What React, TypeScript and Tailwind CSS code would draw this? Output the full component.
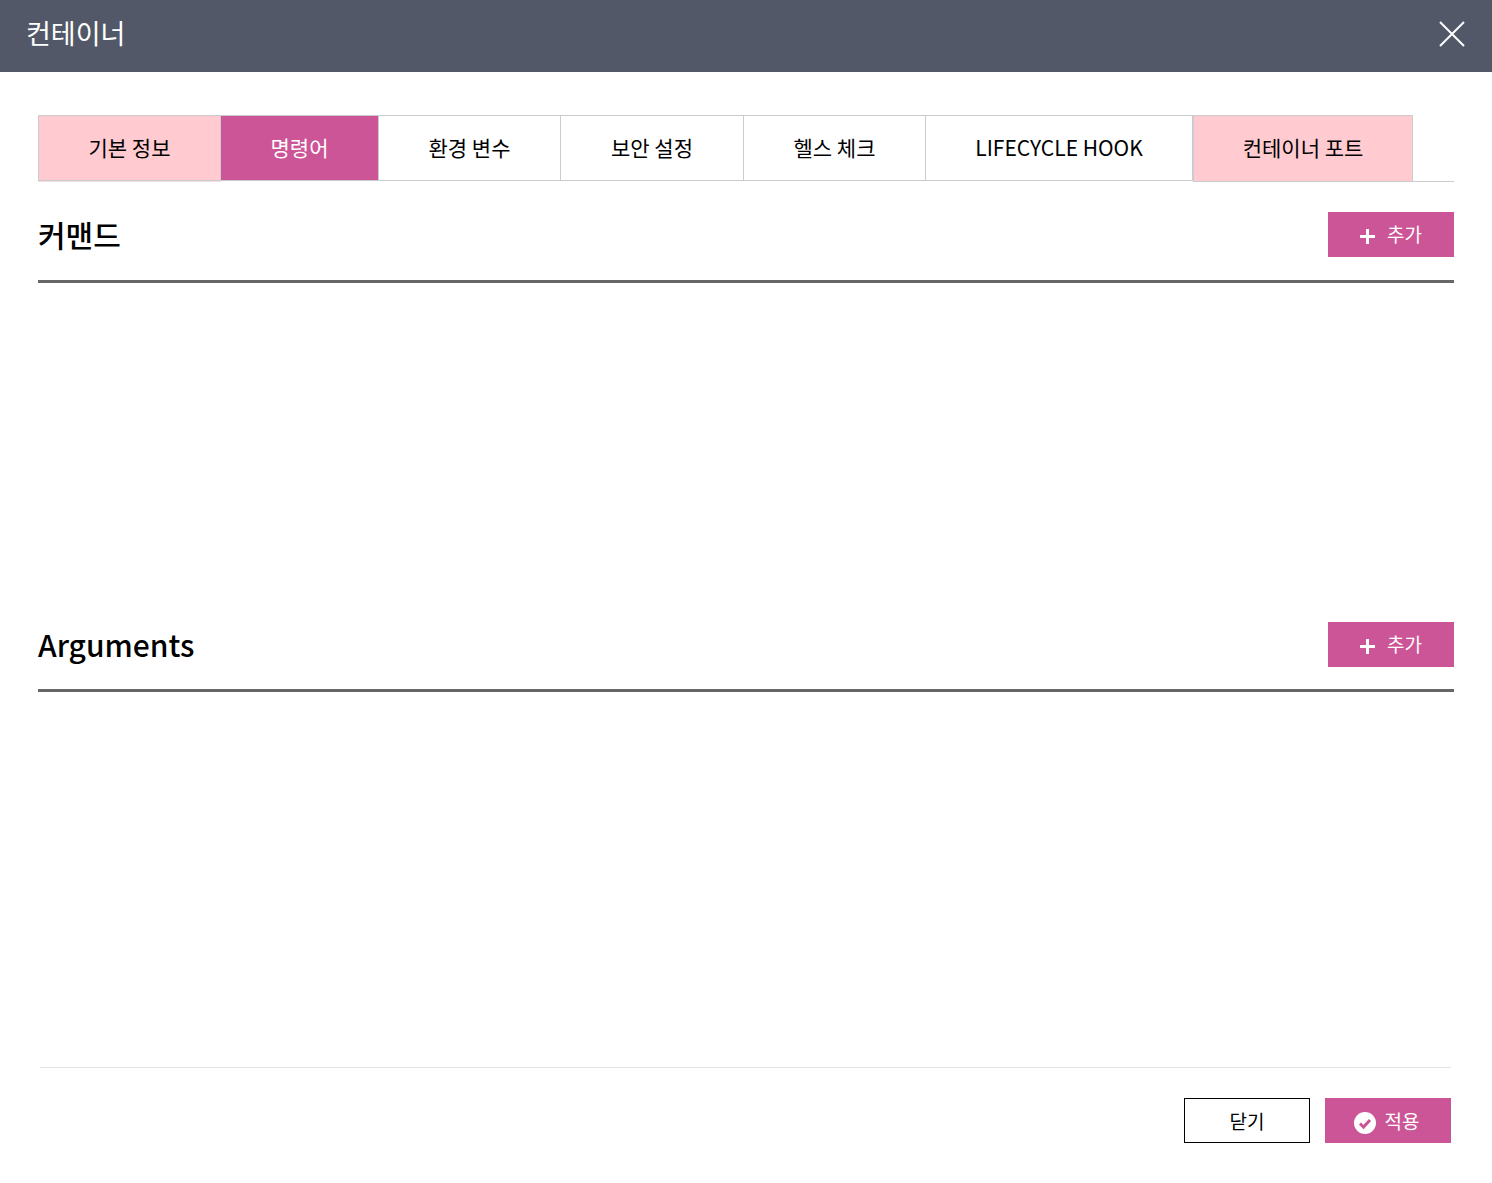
const font = { fontFamily: '"Noto Sans CJK KR", "Noto Sans", sans-serif' };

const tabs = [
  { label: '기본 정보', cls: 'w-[183px] border-l border-b bg-[#ffcbd0] text-black shadow-[0_1px_0_#f3dfe2]' },
  { label: '명령어', cls: 'w-[158px] border-b bg-[#cc5597] text-white shadow-[0_1px_0_#fff]' },
  { label: '환경 변수', cls: 'w-[182px] border-b bg-white text-black shadow-[0_1px_0_#fff]' },
  { label: '보안 설정', cls: 'w-[183px] border-b bg-white text-black shadow-[0_1px_0_#fff]' },
  { label: '헬스 체크', cls: 'w-[182px] border-b bg-white text-black shadow-[0_1px_0_#fff]' },
  { label: 'LIFECYCLE HOOK', cls: 'w-[267px] border-b bg-white text-black shadow-[0_1px_0_#fff]' },
  { label: '컨테이너 포트', cls: 'w-[220px] border-l bg-[#ffcbd0] pb-[2px] text-black' },
];

function AddButton() {
  return (
    <button className="flex h-[45px] w-[126px] items-center justify-center gap-[11px] bg-[#cc5597] text-[19px] text-white">
      <svg width="17" height="17" viewBox="0 0 17 17" className="mt-[3px] -ml-[1px]">
        <path d="M8.5 1v15M1 8.5h15" stroke="#fff" strokeWidth="3" />
      </svg>
      <span className="-mt-[1px]">추가</span>
    </button>
  );
}

function Section({ title, className }: { title: string; className: string }) {
  return (
    <section className={className}>
      <div className="flex h-full items-start justify-between border-b-[3px] border-[#666666]">
        <h3 className="mt-[-1px] text-[30px] leading-[47px] font-medium text-black">{title}</h3>
        <AddButton />
      </div>
    </section>
  );
}

export default function App() {
  return (
    <div style={font} className="flex h-[1183px] w-full flex-col bg-white">
      <header className="flex h-[72px] items-center justify-between bg-[#525867] pr-[27px] pl-[26px]">
        <h2 className="-mt-[6px] text-[27px] text-white">컨테이너</h2>
        <svg width="26" height="26" viewBox="0 0 26 26" className="-mt-[4px]">
          <path d="M1 1l24 24M25 1L1 25" stroke="#fff" strokeWidth="2" />
        </svg>
      </header>

      <div className="flex-1 px-[38px] pt-[43px]">
        <ul className="flex h-[67px] border-b border-[#cccccc]">
          {tabs.map((t) => (
            <li
              key={t.label}
              className={`flex h-[66px] items-center justify-center border-t border-r border-[#cccccc] text-[21px] ${t.cls}`}
            >
              {t.label}
            </li>
          ))}
        </ul>
        <Section title="커맨드" className="mt-[30px] h-[71px]" />
        <Section title="Arguments" className="mt-[339px] h-[70px]" />
      </div>

      <footer className="mr-[41px] mb-[40px] ml-[40px] flex justify-end gap-[15px] border-t border-[#e2e2e2] pt-[30px]">
        <button className="h-[45px] w-[126px] border border-black bg-white pt-[1px] text-[19px] text-black">닫기</button>
        <button className="flex h-[45px] w-[126px] items-center justify-center gap-[9px] bg-[#cc5597] text-[19px] text-white">
          <svg width="22" height="22" viewBox="0 0 22 22" className="mt-[4px] -ml-[3px]">
            <circle cx="11" cy="11" r="11" fill="#fff" />
            <path d="M6 11.5l3.5 3.5L16 8" stroke="#cc5597" strokeWidth="3" fill="none" />
          </svg>
          <span className="mt-[1px]">적용</span>
        </button>
      </footer>
    </div>
  );
}
